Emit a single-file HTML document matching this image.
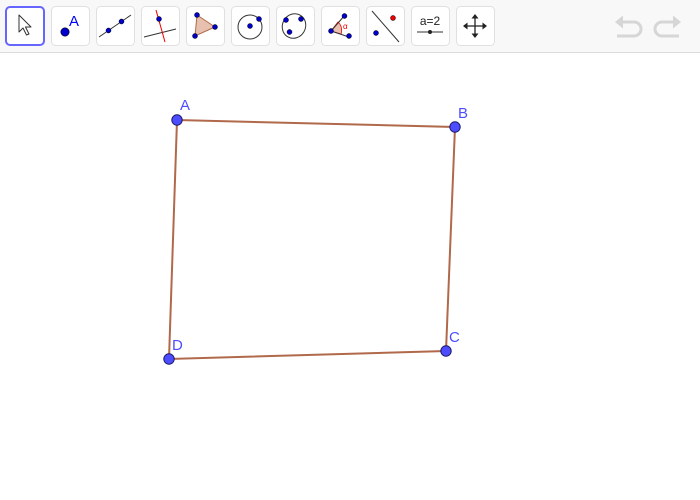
<!DOCTYPE html>
<html><head><meta charset="utf-8"><style>
html,body{margin:0;padding:0;background:#fff;width:700px;height:500px;overflow:hidden}
svg{display:block;font-family:"Liberation Sans",sans-serif}
</style></head><body>
<svg width="700" height="500" viewBox="0 0 700 500" xmlns="http://www.w3.org/2000/svg">
<rect x="0" y="0" width="700" height="52" fill="#f8f8f8"/>
<line x1="0" y1="52.5" x2="700" y2="52.5" stroke="#dcdcdc" stroke-width="1"/>
<g fill="#fff" stroke="#e0e0e0" stroke-width="1">
<rect x="51.5" y="6.5" width="38" height="39" rx="4"/>
<rect x="96.5" y="6.5" width="38" height="39" rx="4"/>
<rect x="141.5" y="6.5" width="38" height="39" rx="4"/>
<rect x="186.5" y="6.5" width="38" height="39" rx="4"/>
<rect x="231.5" y="6.5" width="38" height="39" rx="4"/>
<rect x="276.5" y="6.5" width="38" height="39" rx="4"/>
<rect x="321.5" y="6.5" width="38" height="39" rx="4"/>
<rect x="366.5" y="6.5" width="38" height="39" rx="4"/>
<rect x="411.5" y="6.5" width="38" height="39" rx="4"/>
<rect x="456.5" y="6.5" width="38" height="39" rx="4"/>
</g>
<rect x="6" y="7" width="38" height="38" rx="4" fill="#fff" stroke="#6666ff" stroke-width="2"/>
<path d="M19 15 L19 32 L23 28 L26.5 35 L29 34 L25.5 27 L31 27 Z" fill="#fff" stroke="#333" stroke-width="1" stroke-linejoin="round"/>
<circle cx="65" cy="32" r="4.2" fill="#0000cc" stroke="#000" stroke-width=".6"/>
<text x="69" y="26" font-size="15" fill="#0000ff">A</text>
<line x1="99" y1="37" x2="131" y2="15" stroke="#333" stroke-width="1"/>
<circle cx="108.5" cy="30.5" r="2.5" fill="#0000cc" stroke="#000" stroke-width=".5"/>
<circle cx="121.5" cy="21.5" r="2.5" fill="#0000cc" stroke="#000" stroke-width=".5"/>
<line x1="144" y1="37" x2="176" y2="29" stroke="#333" stroke-width="1"/>
<line x1="156" y1="10" x2="165" y2="42" stroke="#e00" stroke-width="1"/>
<circle cx="159" cy="19" r="2.5" fill="#0000cc" stroke="#000" stroke-width=".5"/>
<path d="M197 15 L215 27 L195 36 Z" fill="#e8c0b0" stroke="#b06a45" stroke-width="1"/>
<circle cx="197" cy="15" r="2.5" fill="#0000cc" stroke="#000" stroke-width=".5"/>
<circle cx="215" cy="27" r="2.5" fill="#0000cc" stroke="#000" stroke-width=".5"/>
<circle cx="195" cy="36" r="2.5" fill="#0000cc" stroke="#000" stroke-width=".5"/>
<circle cx="250" cy="27" r="12" fill="none" stroke="#333" stroke-width="1"/>
<circle cx="250" cy="26" r="2.5" fill="#0000cc" stroke="#000" stroke-width=".5"/>
<circle cx="259" cy="19" r="2.5" fill="#0000cc" stroke="#000" stroke-width=".5"/>
<ellipse cx="294" cy="26" rx="11.5" ry="12.5" transform="rotate(30 294 26)" fill="none" stroke="#333" stroke-width="1"/>
<circle cx="286" cy="20" r="2.5" fill="#0000cc" stroke="#000" stroke-width=".5"/>
<circle cx="301" cy="19" r="2.5" fill="#0000cc" stroke="#000" stroke-width=".5"/>
<circle cx="289.5" cy="32" r="2.5" fill="#0000cc" stroke="#000" stroke-width=".5"/>
<path d="M331 31 L338 22 A11 11 0 0 1 341 34 Z" fill="#e8c0b0" stroke="#e00" stroke-width=".8"/>
<line x1="331" y1="31" x2="345" y2="15" stroke="#333" stroke-width="1"/>
<line x1="331" y1="31" x2="349" y2="37" stroke="#333" stroke-width="1"/>
<circle cx="331" cy="31" r="2.5" fill="#0000cc" stroke="#000" stroke-width=".5"/>
<circle cx="344.5" cy="16" r="2.5" fill="#0000cc" stroke="#000" stroke-width=".5"/>
<circle cx="349" cy="36" r="2.5" fill="#0000cc" stroke="#000" stroke-width=".5"/>
<text x="343" y="29" font-size="8" fill="#e00">α</text>
<line x1="372" y1="11" x2="399" y2="42" stroke="#333" stroke-width="1"/>
<circle cx="376" cy="33" r="2.5" fill="#0000cc" stroke="#000" stroke-width=".5"/>
<circle cx="393" cy="18" r="2.5" fill="#e00" stroke="#000" stroke-width=".5"/>
<text x="430" y="25" font-size="12" fill="#222" text-anchor="middle">a=2</text>
<line x1="417" y1="32" x2="443" y2="32" stroke="#333" stroke-width="1"/>
<circle cx="430" cy="32" r="2" fill="#222"/>
<g stroke="#222" stroke-width="1.3" fill="#222">
<line x1="475" y1="17" x2="475" y2="35"/>
<line x1="466" y1="26" x2="484" y2="26"/>
<path d="M475 14 L471.5 18.5 L478.5 18.5 Z" stroke="none"/>
<path d="M475 38 L471.5 33.5 L478.5 33.5 Z" stroke="none"/>
<path d="M463 26 L467.5 22.5 L467.5 29.5 Z" stroke="none"/>
<path d="M487 26 L482.5 22.5 L482.5 29.5 Z" stroke="none"/>
</g>
<g fill="none" stroke="#d6d6d6" stroke-width="3">
<path d="M621 22 L634 22 A7 7 0 0 1 634 36 L617 36"/>
<path d="M675 22 L662 22 A7 7 0 0 0 662 36 L679 36"/>
</g>
<path d="M615 22 L623 15.5 L623 28.5 Z" fill="#d6d6d6"/>
<path d="M681 22 L673 15.5 L673 28.5 Z" fill="#d6d6d6"/>
<path d="M177 120 L455 127 L446 351 L169 359 Z" fill="none" stroke="#b0694a" stroke-width="2"/>
<g fill="#4d4dff" stroke="#1a1a66" stroke-width="1">
<circle cx="177" cy="120" r="5.2"/>
<circle cx="455" cy="127" r="5.2"/>
<circle cx="446" cy="351" r="5.2"/>
<circle cx="169" cy="359" r="5.2"/>
</g>
<g font-size="15" fill="#4d4dff">
<text x="180" y="110">A</text>
<text x="458" y="118">B</text>
<text x="449" y="342">C</text>
<text x="172" y="350">D</text>
</g>
</svg>
</body></html>
